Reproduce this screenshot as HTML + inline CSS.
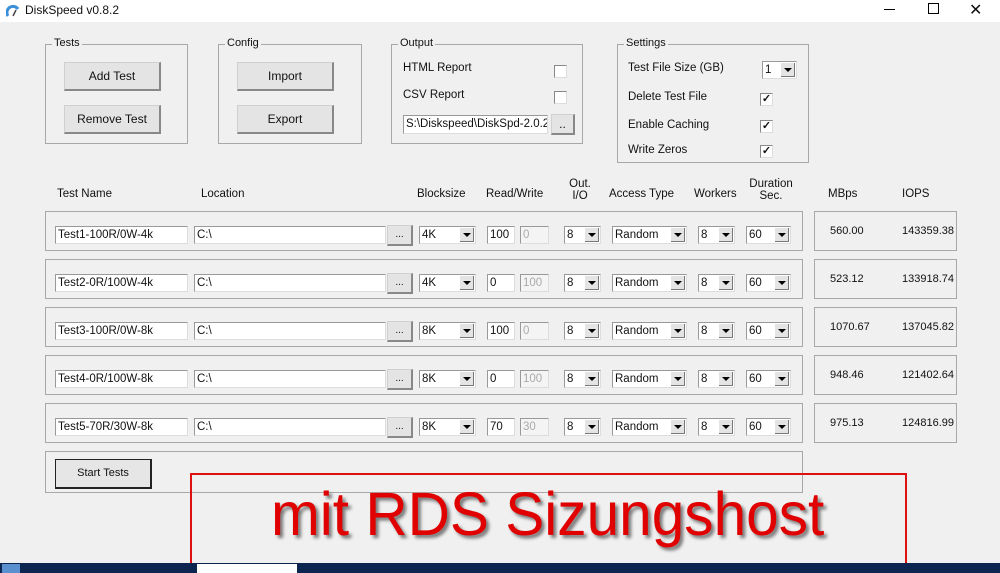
<!DOCTYPE html><html><head><style>
body{margin:0;width:1000px;height:573px;background:#f0f0f0;font-family:"Liberation Sans",sans-serif;font-size:11.5px;color:#111;position:relative;overflow:hidden}
.a{position:absolute}
.grp{position:absolute;border:1px solid #a8a8a8}
.grp>span{position:absolute;top:-8px;left:6px;background:#f0f0f0;padding:0 2px;font-size:11px}
.btn{position:absolute;background:#e4e4e4;border:1px solid #d0d0d0;border-right:2px solid #888;border-bottom:2px solid #888;text-align:center;box-sizing:border-box;font-size:12px}
.tb{position:absolute;background:#fff;border:1px solid #999;border-right-color:#ddd;border-bottom-color:#ddd;box-sizing:border-box;padding-left:2px;font-size:11.5px;line-height:16px;white-space:nowrap;overflow:hidden}
.dis{background:#f4f4f4;color:#aaa}
.cmb{position:absolute;background:#fff;border:1px solid #999;border-right-color:#ddd;border-bottom-color:#ddd;box-sizing:border-box;padding-left:2px;line-height:16px}
.cmb i{position:absolute;right:1px;top:1px;width:14px;height:14px;background:#e4e4e4;border-right:1px solid #777;border-bottom:1px solid #777;box-sizing:border-box}
.cmb i:after{content:"";position:absolute;left:3px;top:5px;border:4px solid transparent;border-top:4px solid #000;border-bottom:0}
.cb{position:absolute;width:11px;height:11px;background:#fff;border:1px solid #888;border-right-color:#ddd;border-bottom-color:#ddd;font-size:11px;line-height:10px;text-align:center;font-weight:bold}
.row{position:absolute;left:45px;width:756px;height:38px;border:1px solid #a8a8a8}
.res{position:absolute;left:814px;width:141px;height:38px;border:1px solid #a8a8a8}
.h{position:absolute;font-size:11.5px;text-align:center;line-height:12px}
.r{position:absolute;font-size:11px}
</style></head><body>
<div class="a" style="left:0;top:0;width:1000px;height:22px;background:#fff"></div>
<svg class="a" style="left:6px;top:4px" width="14" height="13"><path d="M2 12 A6 6 0 0 1 12 5" stroke="#3a8fd8" stroke-width="3" fill="none"/><path d="M7 12 L10 6" stroke="#444" stroke-width="1.5"/></svg>
<div class="a" style="left:25px;top:3px;font-size:12px">DiskSpeed v0.8.2</div>
<div class="a" style="left:884px;top:9px;width:11px;height:1px;background:#000"></div>
<div class="a" style="left:928px;top:3px;width:9px;height:9px;border:1px solid #000"></div>
<div class="a" style="left:969px;top:0px;font-size:16px">✕</div>

<div class="grp" style="left:45px;top:44px;width:141px;height:98px"><span>Tests</span></div>
<div class="btn" style="left:64px;top:62px;width:97px;height:29px;line-height:27px">Add Test</div>
<div class="btn" style="left:64px;top:105px;width:97px;height:29px;line-height:27px">Remove Test</div>
<div class="grp" style="left:218px;top:44px;width:142px;height:98px"><span>Config</span></div>
<div class="btn" style="left:237px;top:62px;width:97px;height:29px;line-height:27px">Import</div>
<div class="btn" style="left:237px;top:105px;width:97px;height:29px;line-height:27px">Export</div>
<div class="grp" style="left:391px;top:44px;width:190px;height:98px"><span>Output</span></div>
<div class="a" style="left:403px;top:62px">HTML Report</div><div class="cb" style="left:554px;top:65px"></div>
<div class="a" style="left:403px;top:89px">CSV Report</div><div class="cb" style="left:554px;top:91px"></div>
<div class="tb" style="left:403px;top:115px;width:145px;height:19px">S:\Diskspeed\DiskSpd-2.0.2</div>
<div class="btn" style="left:551px;top:114px;width:24px;height:21px;line-height:18px">..</div>
<div class="grp" style="left:617px;top:44px;width:190px;height:117px"><span>Settings</span></div>
<div class="a" style="left:628px;top:62px">Test File Size (GB)</div>
<div class="cmb" style="left:762px;top:61px;width:35px;height:18px">1<i></i></div>
<div class="a" style="left:628px;top:91px">Delete Test File</div><div class="cb" style="left:760px;top:93px">✓</div>
<div class="a" style="left:628px;top:119px">Enable Caching</div><div class="cb" style="left:760px;top:120px">✓</div>
<div class="a" style="left:628px;top:144px">Write Zeros</div><div class="cb" style="left:760px;top:145px">✓</div>

<div class="h" style="left:57px;top:188px">Test Name</div>
<div class="h" style="left:201px;top:188px">Location</div>
<div class="h" style="left:417px;top:188px">Blocksize</div>
<div class="h" style="left:486px;top:188px">Read/Write</div>
<div class="h" style="left:568px;top:178px;width:24px">Out.<br>I/O</div>
<div class="h" style="left:609px;top:188px">Access Type</div>
<div class="h" style="left:694px;top:188px">Workers</div>
<div class="h" style="left:748px;top:178px;width:46px">Duration<br>Sec.</div>
<div class="h" style="left:828px;top:188px">MBps</div>
<div class="h" style="left:902px;top:188px">IOPS</div>

<div id="rows"></div>
<script>
var d=[["Test1-100R/0W-4k","4K","100","0","560.00","143359.38"],["Test2-0R/100W-4k","4K","0","100","523.12","133918.74"],["Test3-100R/0W-8k","8K","100","0","1070.67","137045.82"],["Test4-0R/100W-8k","8K","0","100","948.46","121402.64"],["Test5-70R/30W-8k","8K","70","30","975.13","124816.99"]];
var h="";d.forEach(function(r,i){var y=211+48*i,t=y+15;
h+='<div class="row" style="top:'+y+'px"></div><div class="res" style="top:'+y+'px"></div>'+
'<div class="tb" style="left:55px;top:'+t+'px;width:133px;height:18px">'+r[0]+'</div>'+
'<div class="tb" style="left:194px;top:'+t+'px;width:192px;height:18px">C:\\</div>'+
'<div class="btn" style="left:387px;top:'+(t-1)+'px;width:26px;height:21px;line-height:18px;font-size:10px">...</div>'+
'<div class="cmb" style="left:419px;top:'+t+'px;width:57px;height:18px">'+r[1]+'<i></i></div>'+
'<div class="tb" style="left:487px;top:'+t+'px;width:28px;height:18px">'+r[2]+'</div>'+
'<div class="tb dis" style="left:520px;top:'+t+'px;width:29px;height:18px">'+r[3]+'</div>'+
'<div class="cmb" style="left:564px;top:'+t+'px;width:37px;height:18px">8<i></i></div>'+
'<div class="cmb" style="left:612px;top:'+t+'px;width:75px;height:18px">Random<i></i></div>'+
'<div class="cmb" style="left:698px;top:'+t+'px;width:37px;height:18px">8<i></i></div>'+
'<div class="cmb" style="left:746px;top:'+t+'px;width:45px;height:18px">60<i></i></div>'+
'<div class="r" style="left:830px;top:'+(y+14)+'px">'+r[4]+'</div>'+
'<div class="r" style="left:902px;top:'+(y+14)+'px">'+r[5]+'</div>';});
document.getElementById("rows").innerHTML=h;
</script>
<div class="row" style="top:451px;height:40px"></div>
<div class="a" style="left:55px;top:459px;width:94px;height:27px;border:1px solid #222;border-right:2px solid #222;border-bottom:2px solid #222;background:#e6e6e6;text-align:center;line-height:27px;font-size:11px">Start Tests</div>
<div class="a" style="left:190px;top:473px;width:713px;height:88px;border:2px solid #d11"></div>
<div class="a" style="left:271px;top:479px;font-size:61px;color:#e00000;text-shadow:3px 3px 3px #777;white-space:nowrap;transform:scaleX(0.96);transform-origin:0 0">mit RDS Sizungshost</div>
<div class="a" style="left:0;top:563px;width:1000px;height:10px;background:#0c2450"></div>
<div class="a" style="left:197px;top:564px;width:100px;height:9px;background:#fff"></div>
<div class="a" style="left:2px;top:564px;width:18px;height:9px;background:#5a90d0"></div>
</body></html>
